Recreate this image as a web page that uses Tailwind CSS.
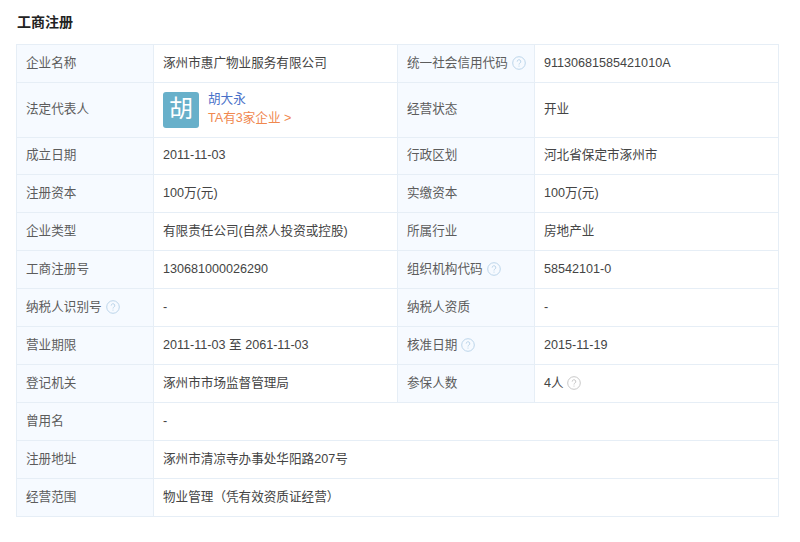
<!DOCTYPE html>
<html lang="zh-CN">
<head>
  <meta charset="UTF-8" />
  <title>工商注册</title>
  <script src="https://cdn.jsdelivr.net/npm/@tailwindcss/browser@4"></script>
</head>
<body class="bg-white text-[12.6px] text-[#444] font-['Liberation_Sans','Noto_Sans_CJK_SC',sans-serif]">
  <div class="px-4 pt-[13px] w-[794px]">
    <h2 class="text-[14px] leading-[18px] font-bold text-[#222] mb-[13px] ml-px">工商注册</h2>
    <table class="w-[762px] table-fixed border-collapse border border-[#e6eef6] leading-[20px] [&_td]:pb-[2px] [&_th]:pb-[2px]">
      <colgroup>
        <col class="w-[137px]" /><col class="w-[244px]" /><col class="w-[137px]" /><col class="w-[244px]" />
      </colgroup>
      <tbody>
        <tr class="h-[38px]">
          <th class="border border-[#e6eef6] bg-[#f6faff] pl-[9px] text-left font-normal text-[#5c5c5c]">企业名称</th>
          <td class="border border-[#e6eef6] pl-[9px]">涿州市惠广物业服务有限公司</td>
          <th class="border border-[#e6eef6] bg-[#f6faff] pl-[9px] text-left font-normal text-[#5c5c5c]">
            <span class="flex items-center gap-[4px]">统一社会信用代码
              <svg class="w-[14px] h-[14px]" viewBox="0 0 14 14" fill="none" stroke="#bcd5ea"><circle cx="7" cy="7" r="6.3" /><path d="M5.2 5.6a1.8 1.8 0 1 1 2.7 1.5c-.6.4-.9.7-.9 1.4M7 9.6v1" /></svg>
            </span>
          </th>
          <td class="border border-[#e6eef6] pl-[9px]">91130681585421010A</td>
        </tr>
        <tr class="h-[55px]">
          <th class="border border-[#e6eef6] bg-[#f6faff] pl-[9px] text-left font-normal text-[#5c5c5c]">法定代表人</th>
          <td class="border border-[#e6eef6] pl-[9px] !pb-0">
            <div class="flex items-center gap-[9px]">
              <div class="w-9 h-9 rounded-[3px] bg-[#68b0ca] text-white text-[24px] leading-[34px] text-center">胡</div>
              <div class="leading-[19px] -mt-[2px]">
                <div class="text-[#4a72c9]">胡大永</div>
                <div class="text-[#f0884f]">TA有3家企业 &gt;</div>
              </div>
            </div>
          </td>
          <th class="border border-[#e6eef6] bg-[#f6faff] pl-[9px] text-left font-normal text-[#5c5c5c]">经营状态</th>
          <td class="border border-[#e6eef6] pl-[9px]">开业</td>
        </tr>
        <tr class="h-[37px]">
          <th class="border border-[#e6eef6] bg-[#f6faff] pl-[9px] text-left font-normal text-[#5c5c5c]">成立日期</th>
          <td class="border border-[#e6eef6] pl-[9px]">2011-11-03</td>
          <th class="border border-[#e6eef6] bg-[#f6faff] pl-[9px] text-left font-normal text-[#5c5c5c]">行政区划</th>
          <td class="border border-[#e6eef6] pl-[9px]">河北省保定市涿州市</td>
        </tr>
        <tr class="h-[38px]">
          <th class="border border-[#e6eef6] bg-[#f6faff] pl-[9px] text-left font-normal text-[#5c5c5c]">注册资本</th>
          <td class="border border-[#e6eef6] pl-[9px]">100万(元)</td>
          <th class="border border-[#e6eef6] bg-[#f6faff] pl-[9px] text-left font-normal text-[#5c5c5c]">实缴资本</th>
          <td class="border border-[#e6eef6] pl-[9px]">100万(元)</td>
        </tr>
        <tr class="h-[38px]">
          <th class="border border-[#e6eef6] bg-[#f6faff] pl-[9px] text-left font-normal text-[#5c5c5c]">企业类型</th>
          <td class="border border-[#e6eef6] pl-[9px]">有限责任公司(自然人投资或控股)</td>
          <th class="border border-[#e6eef6] bg-[#f6faff] pl-[9px] text-left font-normal text-[#5c5c5c]">所属行业</th>
          <td class="border border-[#e6eef6] pl-[9px]">房地产业</td>
        </tr>
        <tr class="h-[38px]">
          <th class="border border-[#e6eef6] bg-[#f6faff] pl-[9px] text-left font-normal text-[#5c5c5c]">工商注册号</th>
          <td class="border border-[#e6eef6] pl-[9px]">130681000026290</td>
          <th class="border border-[#e6eef6] bg-[#f6faff] pl-[9px] text-left font-normal text-[#5c5c5c]">
            <span class="flex items-center gap-[4px]">组织机构代码
              <svg class="w-[14px] h-[14px]" viewBox="0 0 14 14" fill="none" stroke="#bcd5ea"><circle cx="7" cy="7" r="6.3" /><path d="M5.2 5.6a1.8 1.8 0 1 1 2.7 1.5c-.6.4-.9.7-.9 1.4M7 9.6v1" /></svg>
            </span>
          </th>
          <td class="border border-[#e6eef6] pl-[9px]">58542101-0</td>
        </tr>
        <tr class="h-[38px]">
          <th class="border border-[#e6eef6] bg-[#f6faff] pl-[9px] text-left font-normal text-[#5c5c5c]">
            <span class="flex items-center gap-[4px]">纳税人识别号
              <svg class="w-[14px] h-[14px]" viewBox="0 0 14 14" fill="none" stroke="#bcd5ea"><circle cx="7" cy="7" r="6.3" /><path d="M5.2 5.6a1.8 1.8 0 1 1 2.7 1.5c-.6.4-.9.7-.9 1.4M7 9.6v1" /></svg>
            </span>
          </th>
          <td class="border border-[#e6eef6] pl-[9px]">-</td>
          <th class="border border-[#e6eef6] bg-[#f6faff] pl-[9px] text-left font-normal text-[#5c5c5c]">纳税人资质</th>
          <td class="border border-[#e6eef6] pl-[9px]">-</td>
        </tr>
        <tr class="h-[38px]">
          <th class="border border-[#e6eef6] bg-[#f6faff] pl-[9px] text-left font-normal text-[#5c5c5c]">营业期限</th>
          <td class="border border-[#e6eef6] pl-[9px]">2011-11-03 至 2061-11-03</td>
          <th class="border border-[#e6eef6] bg-[#f6faff] pl-[9px] text-left font-normal text-[#5c5c5c]">
            <span class="flex items-center gap-[4px]">核准日期
              <svg class="w-[14px] h-[14px]" viewBox="0 0 14 14" fill="none" stroke="#bcd5ea"><circle cx="7" cy="7" r="6.3" /><path d="M5.2 5.6a1.8 1.8 0 1 1 2.7 1.5c-.6.4-.9.7-.9 1.4M7 9.6v1" /></svg>
            </span>
          </th>
          <td class="border border-[#e6eef6] pl-[9px]">2015-11-19</td>
        </tr>
        <tr class="h-[38px]">
          <th class="border border-[#e6eef6] bg-[#f6faff] pl-[9px] text-left font-normal text-[#5c5c5c]">登记机关</th>
          <td class="border border-[#e6eef6] pl-[9px]">涿州市市场监督管理局</td>
          <th class="border border-[#e6eef6] bg-[#f6faff] pl-[9px] text-left font-normal text-[#5c5c5c]">参保人数</th>
          <td class="border border-[#e6eef6] pl-[9px]">
            <span class="flex items-center gap-[3px]">4人
              <svg class="w-[14px] h-[14px]" viewBox="0 0 14 14" fill="none" stroke="#c8c8c8"><circle cx="7" cy="7" r="6.3" /><path d="M5.2 5.6a1.8 1.8 0 1 1 2.7 1.5c-.6.4-.9.7-.9 1.4M7 9.6v1" /></svg>
            </span>
          </td>
        </tr>
        <tr class="h-[38px]">
          <th class="border border-[#e6eef6] bg-[#f6faff] pl-[9px] text-left font-normal text-[#5c5c5c]">曾用名</th>
          <td colspan="3" class="border border-[#e6eef6] pl-[9px]">-</td>
        </tr>
        <tr class="h-[38px]">
          <th class="border border-[#e6eef6] bg-[#f6faff] pl-[9px] text-left font-normal text-[#5c5c5c]">注册地址</th>
          <td colspan="3" class="border border-[#e6eef6] pl-[9px]">涿州市清凉寺办事处华阳路207号</td>
        </tr>
        <tr class="h-[38px]">
          <th class="border border-[#e6eef6] bg-[#f6faff] pl-[9px] text-left font-normal text-[#5c5c5c]">经营范围</th>
          <td colspan="3" class="border border-[#e6eef6] pl-[9px]">物业管理（凭有效资质证经营）</td>
        </tr>
      </tbody>
    </table>
  </div>
</body>
</html>
